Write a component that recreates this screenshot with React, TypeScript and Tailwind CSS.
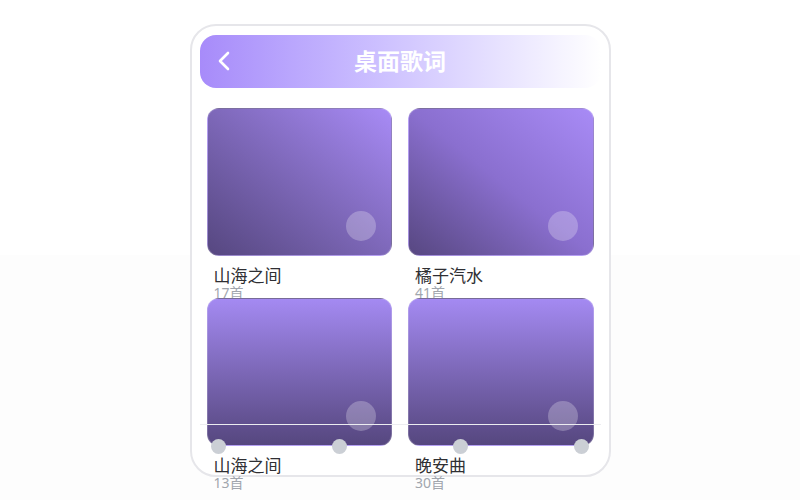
const playlists = [
  { name: "山海之间", count: 17, tone: "bg-gradient-to-tr from-[#564780] to-[#a88bf6]" },
  { name: "橘子汽水", count: 41, tone: "bg-gradient-to-tr from-[#574781] via-[#8a6fcf] to-[#a88bf6]" },
  { name: "山海之间", count: 13, tone: "bg-gradient-to-b from-[#a48af2] to-[#56477f]" },
  { name: "晚安曲", count: 30, tone: "bg-gradient-to-b from-[#a48af2] to-[#56477f]" },
];

function BackIcon() {
  return (
    <svg width="14" height="20" viewBox="0 0 14 20" fill="none">
      <polyline
        points="11,2 3,10 11,18"
        stroke="white"
        strokeWidth="2.6"
        strokeLinecap="round"
        strokeLinejoin="round"
      />
    </svg>
  );
}

export default function App() {
  return (
    <div
      className="min-h-screen flex justify-center pt-6 bg-[linear-gradient(to_bottom,#ffffff_255px,#fdfdfd_255px)]"
      style={{ fontFamily: '"Noto Sans", "Noto Sans CJK SC", sans-serif' }}
    >
      <div className="relative w-[421px] h-[453px] rounded-[26px] border-2 border-[#e6e6ea] bg-white px-2 pt-[9px]">
        {/* Header */}
        <div className="relative h-[53px] rounded-[16px] bg-gradient-to-r from-[#a78bfa] to-[#ffffff] flex items-center justify-center">
          <div className="absolute left-[17px] top-[16px]">
            <BackIcon />
          </div>
          <h1 className="text-[23px] font-bold text-white">桌面歌词</h1>
        </div>

        {/* Playlists */}
        <div className="mt-5 px-[7px] grid grid-cols-2 gap-x-4">
          {playlists.map((p, i) => (
            <div key={i} className="h-[190px]">
              <div className={`relative h-[148px] rounded-[12px] border border-white/20 ${p.tone}`}>
                <div className="absolute right-[15px] bottom-[14px] w-[30px] h-[30px] rounded-full bg-white/25" />
              </div>
              <p className="mt-[10px] pl-[7px] text-[17px] leading-[20px] text-[#2f2f33]">{p.name}</p>
              <p className="pl-[7px] text-[14px] leading-[13px] text-[#a1a6ae]">{p.count}首</p>
            </div>
          ))}
        </div>

        {/* Overlay line and dots */}
        <div className="absolute left-2 right-2 top-[398px] h-px bg-[#ececf0]" />
        <div className="absolute left-[15px] right-[15px] top-[413px] flex justify-between px-1">
          {[0, 1, 2, 3].map((d) => (
            <span key={d} className="w-[15px] h-[15px] rounded-full bg-[#cbcfd5]" />
          ))}
        </div>
      </div>
    </div>
  );
}
